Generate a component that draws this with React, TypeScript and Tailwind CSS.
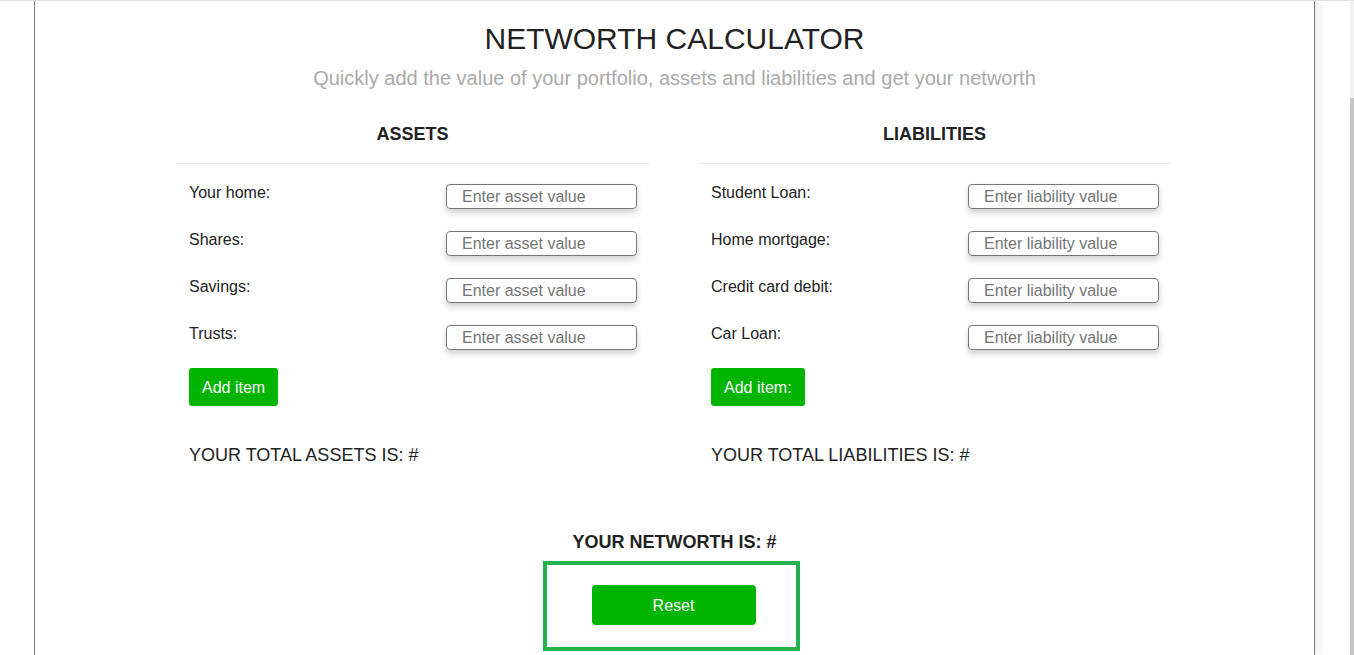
import React from "react"

const assets = ["Your home:", "Shares:", "Savings:", "Trusts:"]
const liabilities = ["Student Loan:", "Home mortgage:", "Credit card debit:", "Car Loan:"]

function Column({ title, rows, placeholder, button, total }: { title: string; rows: string[]; placeholder: string; button: string; total: string }) {
    return (
        <div className="w-[473px]">
            <h2 className="text-center text-[18px] leading-[21px] font-bold text-[#222]">{title}</h2>
            <div className="mt-[18px] h-px bg-[#e6e6e6]" />
            <div className="pl-[13px] pr-[12px] pt-[20px]">
                <div className="flex flex-col gap-[22px]">
                    {rows.map((r) => (
                        <div key={r} className="flex items-start justify-between">
                            <label className="text-[16px] leading-[18px] text-[#222]">{r}</label>
                            <input
                                type="text"
                                placeholder={placeholder}
                                className="w-[191px] h-[25px] rounded-[4px] border border-[#767676] pl-[15px] text-[16px] text-[#222] placeholder:text-[#757575] shadow-[0_4px_6px_rgba(0,0,0,0.18)] outline-none"
                            />
                        </div>
                    ))}
                </div>
                <button className="mt-[18px] h-[38px] px-[13px] pt-px rounded-[3px] bg-[#00b400] text-white text-[16px]">{button}</button>
                <p className="mt-[39px] text-[18px] leading-[21px] text-[#222]">{total}</p>
            </div>
        </div>
    )
}

export default function App() {
    return (
        <div className="h-[655px] overflow-hidden flex border-t border-[#e2e2e2] bg-white" style={{ fontFamily: '"Liberation Sans", Arial, sans-serif' }}>
            <div className="w-[34px] shrink-0" />
            <main className="w-[1281px] shrink-0 border-x border-[#7a7a7a] shadow-[4px_0_8px_rgba(0,0,0,0.08)]">
                <h1 className="mt-[21px] text-center text-[30px] leading-[34px] text-[#222]">NETWORTH CALCULATOR</h1>
                <p className="mt-[11px] text-center text-[20px] leading-[23px] text-[#aaaaaa]">
                    Quickly add the value of your portfolio, assets and liabilities and get your networth
                </p>
                <div className="mt-[34px] flex justify-center gap-[49px] pr-[2px]">
                    <Column title="ASSETS" rows={assets} placeholder="Enter asset value" button="Add item" total="YOUR TOTAL ASSETS IS: #" />
                    <Column title="LIABILITIES" rows={liabilities} placeholder="Enter liability value" button="Add item:" total="YOUR TOTAL LIABILITIES IS: #" />
                </div>
                <h3 className="mt-[66px] text-center text-[18px] leading-[21px] font-bold text-[#222]">YOUR NETWORTH IS: #</h3>
                <div className="mt-[8px] flex justify-center pr-[7px]">
                    <div className="w-[257px] h-[90px] border-4 border-[#22b14c] pt-[20px] pl-[45px]">
                        <button className="w-[164px] h-[40px] pt-px rounded-[4px] bg-[#00b400] text-white text-[16px]">Reset</button>
                    </div>
                </div>
            </main>
            <div className="flex-1" />
            <div className="w-[4px] shrink-0 flex flex-col">
                <div className="h-[97px] bg-[#f1f1f1]" />
                <div className="flex-1 bg-[#c6c6c6]" />
            </div>
        </div>
    )
}
